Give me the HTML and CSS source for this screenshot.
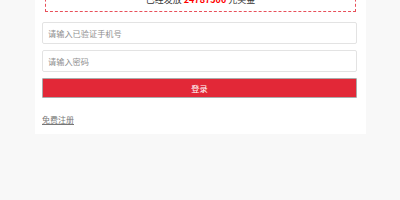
FILE: index.html
```html
<!DOCTYPE html>
<html lang="zh-CN">
<head>
    <meta charset="UTF-8">
    <meta name="viewport" content="width=device-width, initial-scale=1.0">
    <title>登录</title>
    <link rel="stylesheet" href="styles.css">
</head>
<body>

<div class="panel">
    <div class="aviso">已经发放 <b>24787500</b> 元奖金</div>

    <form class="login" onsubmit="return false">
        <input type="text" class="campo" placeholder="请输入已验证手机号">
        <input type="password" class="campo" placeholder="请输入密码">
        <button type="submit" class="entrar">登录</button>
    </form>

    <a href="#" class="registro">免费注册</a>
</div>

</body>
</html>
```

FILE: styles.css
```css
body {
    margin: 0;
    background-color: #f8f8f8;
    font-family: "Noto Sans CJK SC", "Noto Sans", sans-serif;
    color: #333;
}
.panel {
    width: 331px;
    box-sizing: border-box;
    margin: -17px 0 0 35px;
    padding: 0 9px 6px 7px;
    background-color: #fff;
}
.aviso {
    margin: 0 1px 0 3px;
    padding: 10px 0 5px;
    border: 1px dashed #e8505a;
    text-align: center;
    font-size: 9px;
    line-height: 12px;
    color: #333;
}
.aviso b {
    color: #f00;
}
.login {
    margin-top: 10px;
}
.campo {
    display: block;
    width: 100%;
    height: 22px;
    box-sizing: border-box;
    margin: 0 0 6px;
    padding: 0 5px;
    border: 1px solid #e3e3e3;
    border-radius: 2px;
    font-family: inherit;
    font-size: 8.2px;
    color: #333;
    outline: none;
}
.campo::placeholder {
    color: #8f8f8f;
}
.entrar {
    display: block;
    width: 100%;
    height: 20px;
    box-sizing: border-box;
    margin: 0;
    padding: 0;
    border: 1px solid #ababab;
    border-radius: 1px;
    background-color: #e22837;
    color: #fff;
    font-family: inherit;
    font-size: 8.2px;
    cursor: pointer;
}
.registro {
    display: inline-block;
    margin-top: 17px;
    font-size: 8px;
    line-height: 10px;
    color: #777;
    text-decoration: underline;
}
```
